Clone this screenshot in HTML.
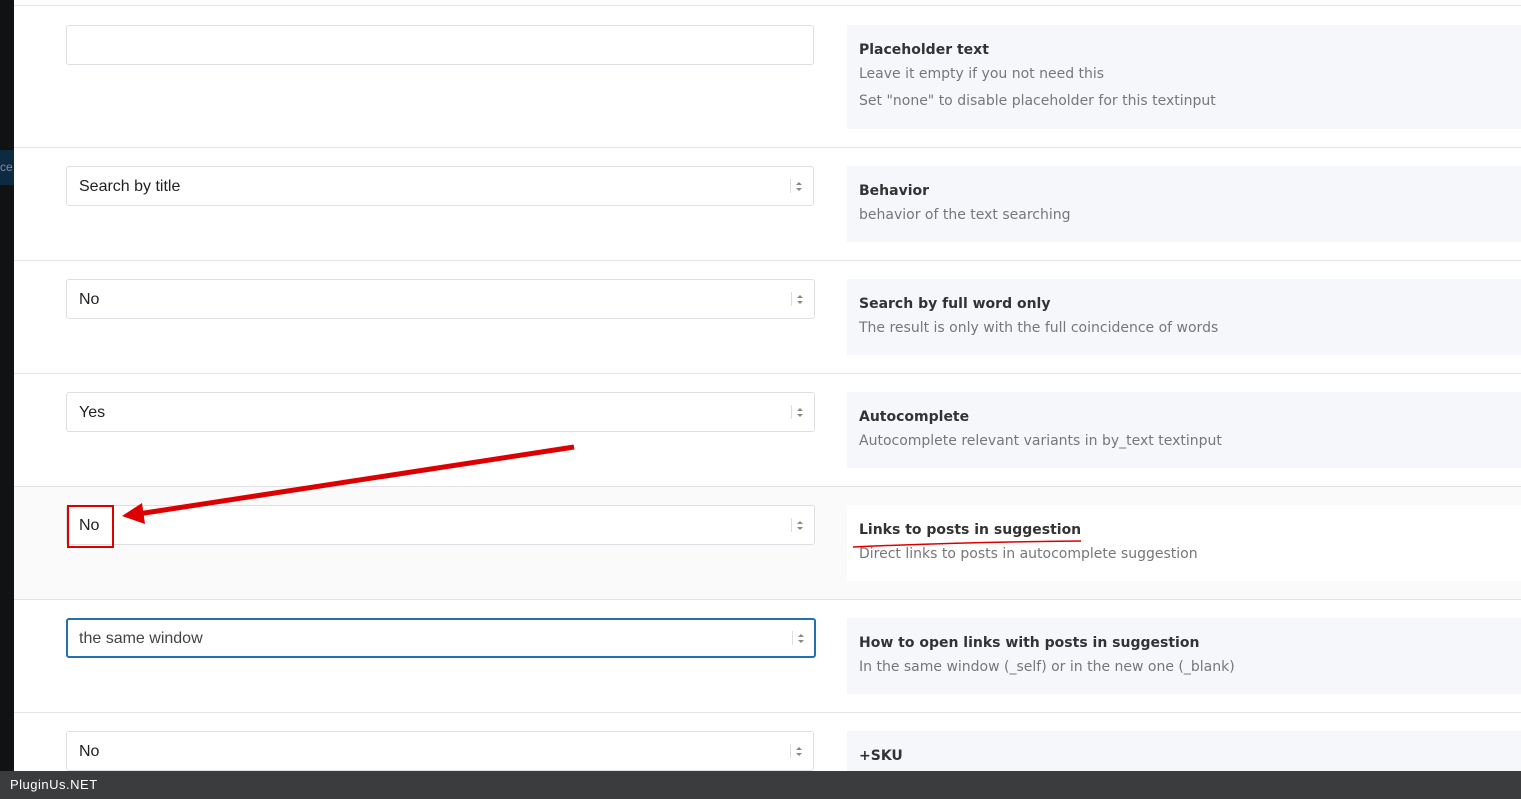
<!DOCTYPE html><html style="overflow:hidden"><head><style>
html,body{overflow:hidden}
body{margin:0;width:1521px;height:799px;overflow:hidden;background:#fff;font-family:"Liberation Sans",sans-serif;position:relative}
.strip{position:absolute;left:0;top:0;width:14px;height:799px;background:#101214}
.row{position:absolute;left:14px;right:0;border-top:1px solid #e2e4e7;overflow:hidden}
.in{position:absolute;left:52px;width:747px;height:40px;border:1px solid #dcdfe4;border-radius:3px;background:#fff;box-sizing:border-box;font-size:16px;color:#222;padding:11px 12px;line-height:17px}
.in .ar{position:absolute;right:10px;top:12px;width:12px;height:14px;border-left:1px solid #ddd}
.in .ar:before{content:"";position:absolute;left:5px;top:3px;border:3px solid transparent;border-bottom:3px solid #888;border-top:0}
.in .ar:after{content:"";position:absolute;left:5px;top:9px;border:3px solid transparent;border-top:3px solid #888;border-bottom:0}
.d{position:absolute;left:833px;right:0;background:#f6f7fb;font-family:"DejaVu Sans",sans-serif;font-size:14px;color:#777;padding:0 12px;box-sizing:border-box}
.d b{display:block;color:#333;font-weight:600;margin-bottom:8px}
.d div{margin-bottom:11px}
.foot{position:absolute;left:0;top:771px;width:1521px;height:28px;background:#3b3c3d;color:#fff;font-size:13px;line-height:28px;padding-left:10px;box-sizing:border-box;letter-spacing:.5px}
</style></head><body>
<div class="strip"></div>
<div style="position:absolute;left:0;top:150px;width:14px;height:35px;background:#0c2a40;color:#88a;font-size:12px;line-height:35px;overflow:hidden">ce</div>

<div class="row" style="top:5px;height:142px">
<div class="in" style="top:19px;width:748px"></div>
<div class="d" style="top:19px;height:104px;padding-top:17px"><b>Placeholder text</b><div>Leave it empty if you not need this</div><div>Set "none" to disable placeholder for this textinput</div></div></div>

<div class="row" style="top:147px;height:113px">
<div class="in" style="top:18px;width:748px">Search by title<span class="ar"></span></div>
<div class="d" style="top:18px;height:76px;padding-top:17px"><b>Behavior</b><div>behavior of the text searching</div></div></div>

<div class="row" style="top:260px;height:113px">
<div class="in" style="top:18px;width:749px">No<span class="ar"></span></div>
<div class="d" style="top:18px;height:76px;padding-top:17px"><b>Search by full word only</b><div>The result is only with the full coincidence of words</div></div></div>

<div class="row" style="top:373px;height:113px">
<div class="in" style="top:18px;width:749px">Yes<span class="ar"></span></div>
<div class="d" style="top:18px;height:76px;padding-top:17px"><b>Autocomplete</b><div>Autocomplete relevant variants in by_text textinput</div></div></div>

<div class="row" style="top:486px;height:113px;background:#fafafa">
<div class="in" style="top:18px;width:749px">No<span class="ar"></span></div>
<div class="d" style="top:18px;height:76px;padding-top:17px;background:#fff"><b>Links to posts in suggestion</b><div>Direct links to posts in autocomplete suggestion</div></div></div>

<div class="row" style="top:599px;height:113px">
<div class="in" style="top:18px;width:750px;border:2px solid #2271b1;padding:10px 11px;color:#444">the same window<span class="ar" style="right:9px;top:11px"></span></div>
<div class="d" style="top:18px;height:76px;padding-top:17px"><b>How to open links with posts in suggestion</b><div>In the same window (_self) or in the new one (_blank)</div></div></div>

<div class="row" style="top:712px;height:59px">
<div class="in" style="top:18px;width:748px">No<span class="ar"></span></div>
<div class="d" style="top:18px;height:76px;padding-top:17px"><b>+SKU</b></div></div>

<div style="position:absolute;left:67px;top:505px;width:47px;height:43px;border:2px solid #d00;box-sizing:border-box"></div>
<svg style="position:absolute;left:0;top:0" width="1521" height="799"><line x1="574" y1="447" x2="138" y2="514" stroke="#d00" stroke-width="5"/><polygon points="122,516 142,503 145,524" fill="#d00"/><path d="M853 547 Q960 542 1081 541" stroke="#d00" stroke-width="1.5" fill="none"/></svg>
<div class="foot">PluginUs.NET</div>
</body></html>
